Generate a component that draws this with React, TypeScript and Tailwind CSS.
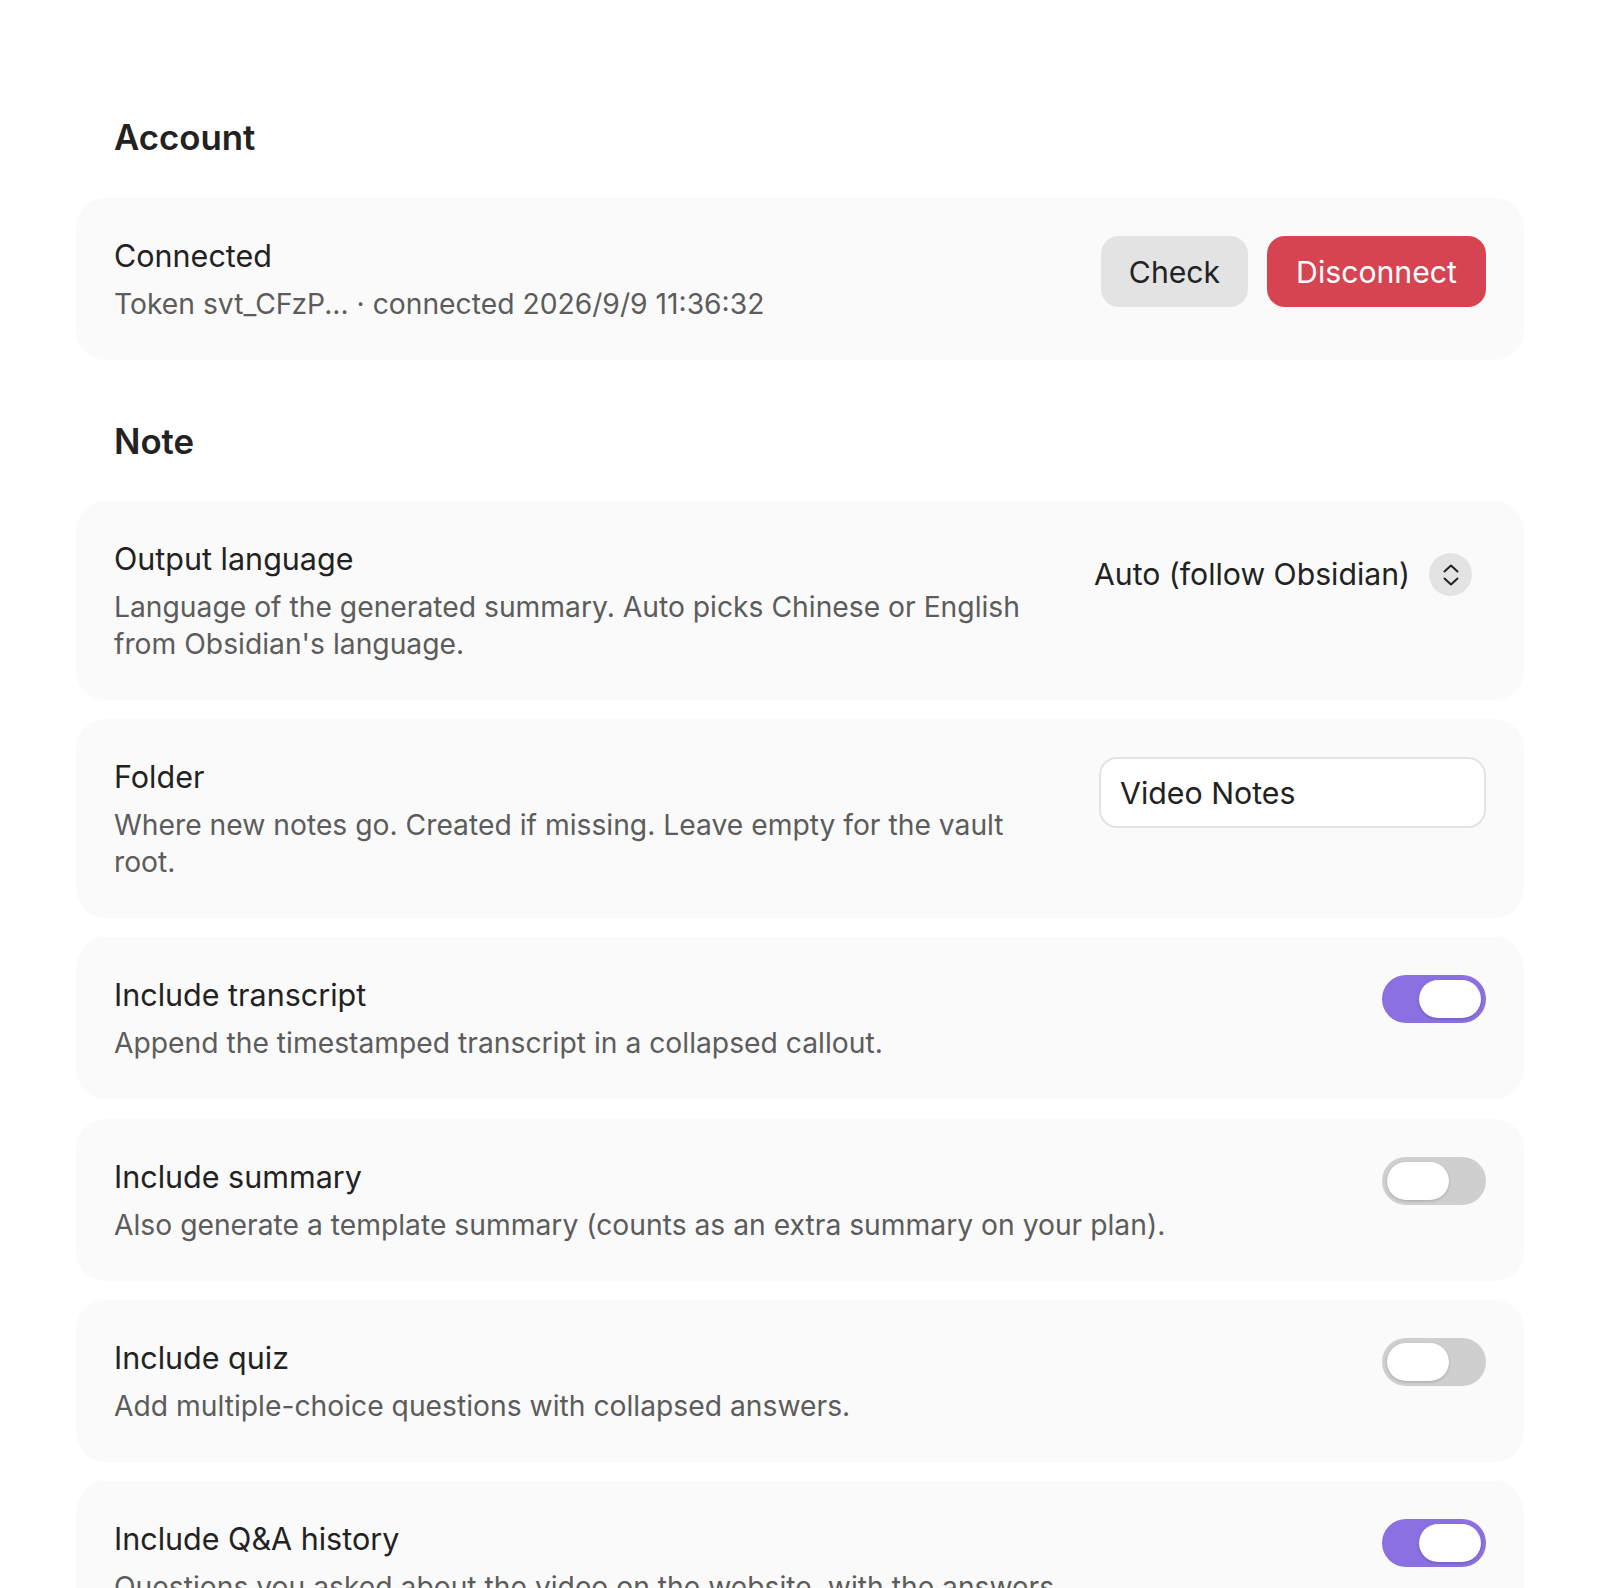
import type { ReactNode } from "react";

const font = { fontFamily: "Inter, 'Noto Sans', sans-serif" };

function Toggle({ on }: { on: boolean }) {
  return (
    <div
      className={
        on
          ? "-mt-[1px] flex h-[48px] w-[104px] shrink-0 items-center justify-end rounded-full bg-[#8a70e0] p-[5px]"
          : "-mt-[1px] flex h-[48px] w-[104px] shrink-0 items-center justify-start rounded-full bg-[#cfcfcf] p-[5px]"
      }
    >
      <div className="h-[38px] w-[62px] rounded-full bg-white shadow-[0_1px_3px_rgba(0,0,0,0.2)]" />
    </div>
  );
}

function Info({ title, children }: { title: string; children: ReactNode }) {
  return (
    <div>
      <div className="text-[30.5px] leading-[38px] text-[#222222]">{title}</div>
      <div className="mt-[11px] text-[28.25px] leading-[37px] text-[#5c5c5c]">{children}</div>
    </div>
  );
}

function Row({ title, children, control }: { title: string; children: ReactNode; control: ReactNode }) {
  return (
    <div className="flex items-start justify-between rounded-[30px] bg-[#fafafa] px-[38px] pb-[37px] pt-[39px]">
      <Info title={title}>{children}</Info>
      {control}
    </div>
  );
}

// two stacked chevrons on the dropdown
function UpDown() {
  return (
    <svg width="18" height="24" viewBox="0 0 18 24" fill="none" stroke="#222222" strokeWidth="2" strokeLinecap="round" strokeLinejoin="round">
      <path d="M2.5 8.5 L9 2.5 L15.5 8.5" />
      <path d="M2.5 15.5 L9 21.5 L15.5 15.5" />
    </svg>
  );
}

export default function App() {
  return (
    <div className="h-[1588px] overflow-hidden bg-white px-[76px] pt-[117px]" style={font}>
      <h2 className="pl-[38px] text-[34.8px] font-semibold leading-[40px] text-[#222222]">Account</h2>
      <div className="mt-[41px]">
        <Row
          title="Connected"
          control={
            <div className="-mt-[1px] flex gap-[19px]">
              <button className="h-[71px] w-[147px] rounded-[18px] bg-[#e3e3e3] pt-[2px] text-[30.2px] text-[#222222]">
                Check
              </button>
              <button className="h-[71px] w-[219px] rounded-[18px] bg-[#d74451] pt-[2px] text-[30.2px] text-white">
                Disconnect
              </button>
            </div>
          }
        >
          Token svt_CFzP... · connected 2026/9/9 11:36:32
        </Row>
      </div>

      <h2 className="mt-[61px] pl-[38px] text-[34.8px] font-semibold leading-[40px] text-[#222222]">Note</h2>
      <div className="mt-[40px] flex flex-col gap-[19.2px]">
        <Row
          title="Output language"
          control={
            <div className="mt-[13px] flex items-center gap-[19px] pr-[14px]">
              <span className="text-[30.2px] leading-[43px] text-[#222222]">Auto (follow Obsidian)</span>
              <span className="flex h-[43px] w-[43px] items-center justify-center rounded-full bg-[#e3e3e3]">
                <UpDown />
              </span>
            </div>
          }
        >
          Language of the generated summary. Auto picks Chinese or English
          <br />
          from Obsidian's language.
        </Row>
        <Row
          title="Folder"
          control={
            <div className="-mt-[1px] flex h-[71px] w-[387px] items-center rounded-[18px] border-2 border-[#e3e3e3] bg-white pl-[19px] pt-[3px] text-[30.3px] text-[#222222]">
              Video Notes
            </div>
          }
        >
          Where new notes go. Created if missing. Leave empty for the vault
          <br />
          root.
        </Row>
        <Row title="Include transcript" control={<Toggle on />}>
          Append the timestamped transcript in a collapsed callout.
        </Row>
        <Row title="Include summary" control={<Toggle on={false} />}>
          Also generate a template summary (counts as an extra summary on your plan).
        </Row>
        <Row title="Include quiz" control={<Toggle on={false} />}>
          Add multiple-choice questions with collapsed answers.
        </Row>
        <Row title="Include Q&A history" control={<Toggle on />}>
          Questions you asked about the video on the website, with the answers.
        </Row>
      </div>
    </div>
  );
}
